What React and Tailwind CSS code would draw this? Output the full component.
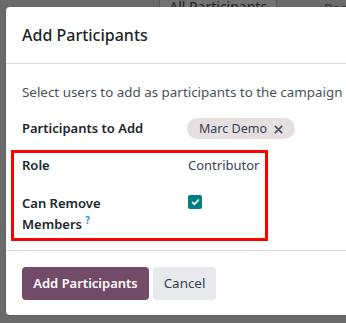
import React from 'react';

const font = { fontFamily: '"Noto Sans", "Open Sans", sans-serif' };

function Backdrop() {
    // strip of page visible above the modal
    return (
        <div className="flex h-[7px] items-end overflow-hidden text-[14px] leading-none text-[#222]">
            <div className="w-[163px]" />
            <div className="flex h-[7px] w-[120px] items-end justify-center overflow-hidden border-x border-[#5a5a5a] bg-[#737373]">
                <span className="translate-y-[7px]">All Participants</span>
            </div>
            <div className="w-[48px]" />
            <span className="translate-y-[9px] text-[#333]">Par</span>
        </div>
    );
}

function Row({ label, children, className = '' }) {
    return (
        <div className={`flex items-start ${className}`}>
            <div className="w-[166px] shrink-0 text-[13px] font-semibold text-[#212529]">{label}</div>
            <div className="text-[#374151]">{children}</div>
        </div>
    );
}

export default function App() {
    return (
        <div className="h-[323px] w-[346px] overflow-hidden bg-[#6b6b6b] text-[13.4px] leading-[21px]" style={font}>
            <Backdrop />
            <div className="pl-[6px]">
                <div className="w-[520px] rounded-[4px] bg-white shadow">
                    <div className="flex h-[57px] items-center border-b border-[#d8dadd] pl-[16px]">
                        <h1 className="text-[16px] font-medium text-[#212529]">Add Participants</h1>
                    </div>

                    <div className="pl-[5px] pt-[18px] pb-[9px]">
                        <p className="pl-[11px] text-[#495057]">Select users to add as participants to the campaign</p>

                        <Row label="Participants to Add" className="mt-[15px] pl-[11px]">
                            <span className="-ml-[1px] inline-flex h-[21px] items-center gap-[7px] rounded-full bg-[#e6dfe0] pl-[12px] pr-[12px] text-[12.5px] text-[#374151]">
                                Marc Demo
                                <svg width="9" height="9" viewBox="0 0 10 10" className="mt-[1px]">
                                    <path d="M1.5 1.5 8.5 8.5 M8.5 1.5 1.5 8.5" stroke="#4b5563" strokeWidth="2" strokeLinecap="round" />
                                </svg>
                            </span>
                        </Row>

                        <div className="mt-[11px] w-[257px] border-[3px] border-[#ff0000] pt-[2px] pb-[3px] pl-[8px]">
                            <Row label="Role"><span className="text-[13px]">Contributor</span></Row>
                            <Row label={<>Can Remove<br />Members <sup className="text-[10px] font-semibold text-[#0b8fd4]">?</sup></>} className="mt-[17px]">
                                <span className="mt-[2px] flex h-[14px] w-[14px] items-center justify-center rounded-[2px] bg-[#017e84]">
                                    <svg width="9" height="8" viewBox="0 0 9 8">
                                        <path d="M1.2 4.2 3.4 6.3 7.8 1.6" fill="none" stroke="white" strokeWidth="1.8" />
                                    </svg>
                                </span>
                            </Row>
                        </div>
                    </div>

                    <div className="flex gap-[4px] border-t border-[#d8dadd] pl-[16px] pt-[16px] pb-[15px]">
                        <button className="h-[33px] w-[127px] rounded-[4px] bg-[#714b67] text-[13px] font-semibold text-white">Add Participants</button>
                        <button className="h-[33px] w-[63px] rounded-[4px] bg-[#e7e9ed] text-[#374151]">Cancel</button>
                    </div>
                </div>
            </div>
        </div>
    );
}
